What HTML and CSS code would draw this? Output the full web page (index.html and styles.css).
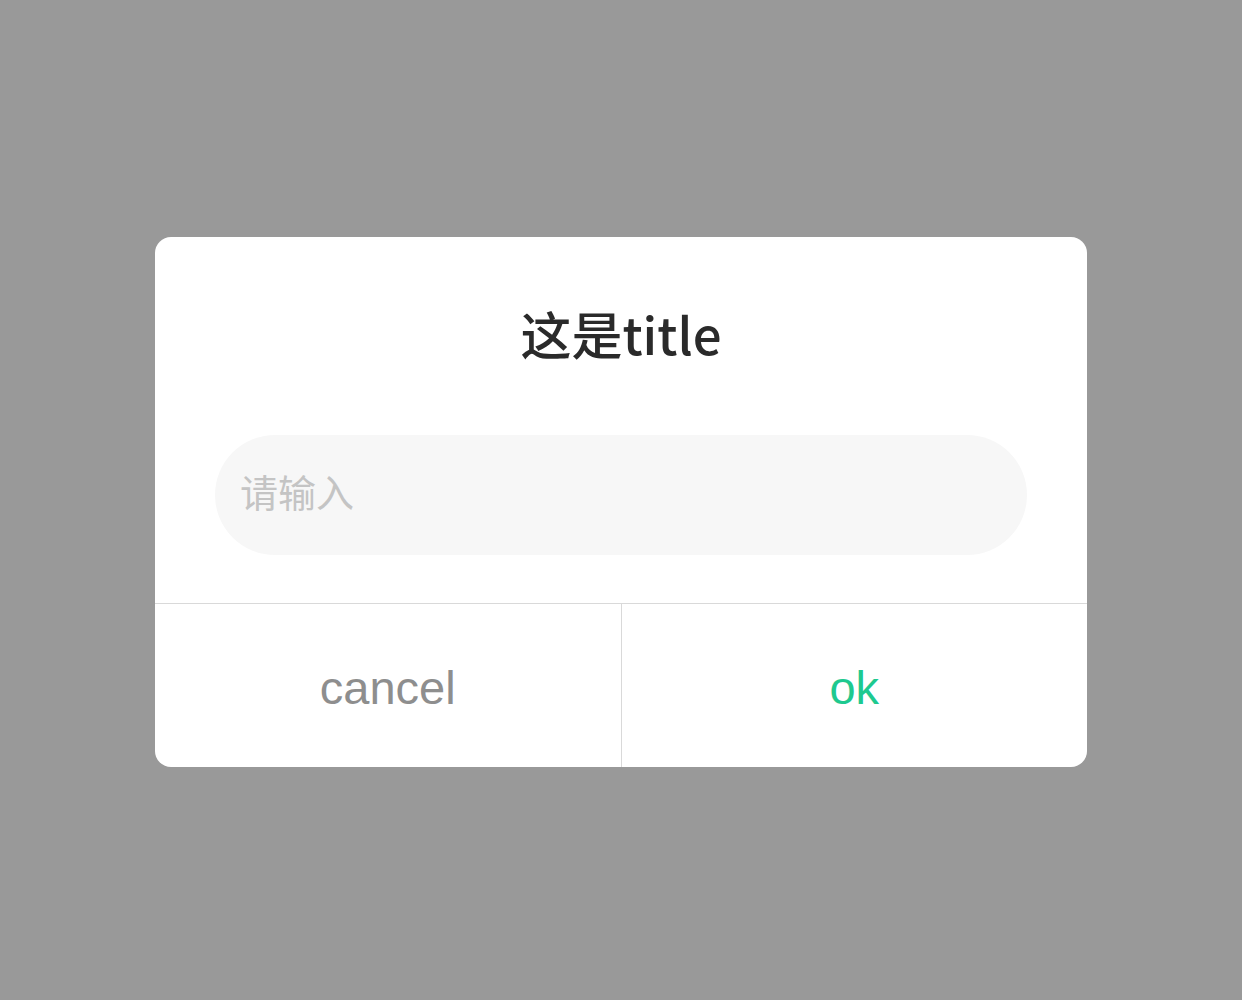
FILE: index.html
```html
<!DOCTYPE html>
<html lang="zh">
<head>
<meta charset="utf-8">
<link rel="stylesheet" href="styles.css">
</head>
<body>
<div class="mask">
  <div class="dialog">
    <div class="title">这是title</div>
    <div class="field"><input class="input" type="text" placeholder="请输入"></div>
    <div class="footer">
      <div class="btn cancel">cancel</div>
      <div class="btn ok">ok</div>
    </div>
  </div>
</div>
</body>
</html>
```
FILE: styles.css
```css
html, body {
  margin: 0;
  padding: 0;
  height: 100%;
}
body {
  background: #999999;
  font-family: "Liberation Sans", "Noto Sans CJK SC", sans-serif;
}
.mask {
  height: 1000px;
  display: flex;
  justify-content: center;
  align-items: flex-start;
  padding-top: 237px;
  box-sizing: border-box;
}
.dialog {
  width: 932px;
  background: #fff;
  border-radius: 16px;
  overflow: hidden;
  padding-top: 46px;
}
.title {
  height: 100px;
  line-height: 100px;
  padding-bottom: 4px;
  text-align: center;
  font-size: 51px;
  font-weight: 500;
  color: #2a2a2a;
  font-family: "Noto Sans CJK SC", "Liberation Sans", sans-serif;
}
.field {
  margin: 48px 60px 48px;
}
.input {
  display: block;
  width: 100%;
  box-sizing: border-box;
  height: 120px;
  border: none;
  outline: none;
  border-radius: 60px;
  background: #f7f7f7;
  padding: 0 25px 9px;
  font-size: 38px;
  font-family: "Noto Sans CJK SC", sans-serif;
  color: #333;
}
.input::placeholder {
  color: #c4c4c4;
}
.footer {
  display: flex;
  border-top: 1px solid #d9d9d9;
  height: 164px;
  box-sizing: border-box;
}
.btn {
  flex: 1;
  display: flex;
  align-items: center;
  justify-content: center;
  font-size: 47px;
  padding-top: 4px;
}
.cancel {
  color: #8e8e8e;
  border-right: 1px solid #d9d9d9;
}
.ok {
  color: #1ec98f;
}
```
